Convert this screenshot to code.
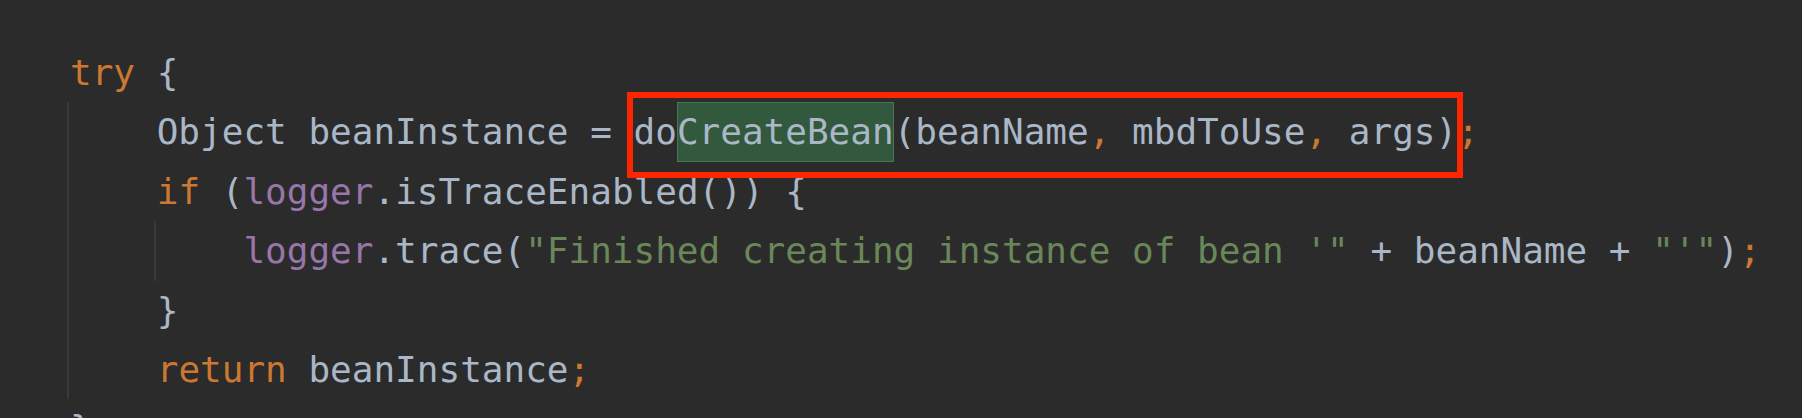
import React from "react";

// Darcula palette
const kw = "text-[#cc7832]";
const field = "text-[#9876aa]";
const str = "text-[#6a8759]";

function Line({ children }: { children?: React.ReactNode }) {
  return <div className="h-[59.4px] leading-[59.4px] whitespace-pre">{children}</div>;
}

export default function App() {
  return (
    <div
      className="relative w-full h-[418px] overflow-hidden bg-[#2b2b2b] text-[#a9b7c6] text-[36px]"
      style={{ fontFamily: '"DejaVu Sans Mono", "Liberation Mono", monospace' }}
    >
      {/* indent guides */}
      <div className="absolute left-[67px] top-[102px] w-[2px] h-[297px] bg-[#393939]" />
      <div className="absolute left-[154px] top-[221px] w-[2px] h-[60px] bg-[#393939]" />

      <div className="pl-[70px] pt-[43px]">
        <Line>
          <span className={kw}>try</span> {"{"}
        </Line>
        <Line>
          {"    Object beanInstance = do"}
          <span className="inline-block h-[59.4px] bg-[#32593d] shadow-[inset_0_0_0_1px_#497553]">CreateBean</span>
          {"(beanName"}
          <span className={kw}>,</span>
          {" mbdToUse"}
          <span className={kw}>,</span>
          {" args)"}
          <span className={kw}>;</span>
        </Line>
        <Line>
          {"    "}
          <span className={kw}>if</span>
          {" ("}
          <span className={field}>logger</span>
          {".isTraceEnabled()) {"}
        </Line>
        <Line>
          {"        "}
          <span className={field}>logger</span>
          {".trace("}
          <span className={str}>{"\"Finished creating instance of bean '\""}</span>
          {" + beanName + "}
          <span className={str}>{"\"'\""}</span>
          {")"}
          <span className={kw}>;</span>
        </Line>
        <Line>{"    }"}</Line>
        <Line>
          {"    "}
          <span className={kw}>return</span>
          {" beanInstance"}
          <span className={kw}>;</span>
        </Line>
        <Line>{"}"}</Line>
      </div>

      {/* annotation box */}
      <div className="absolute left-[627px] top-[92px] w-[836px] h-[86px] border-[6px] border-[#fe2600]" />
    </div>
  );
}
